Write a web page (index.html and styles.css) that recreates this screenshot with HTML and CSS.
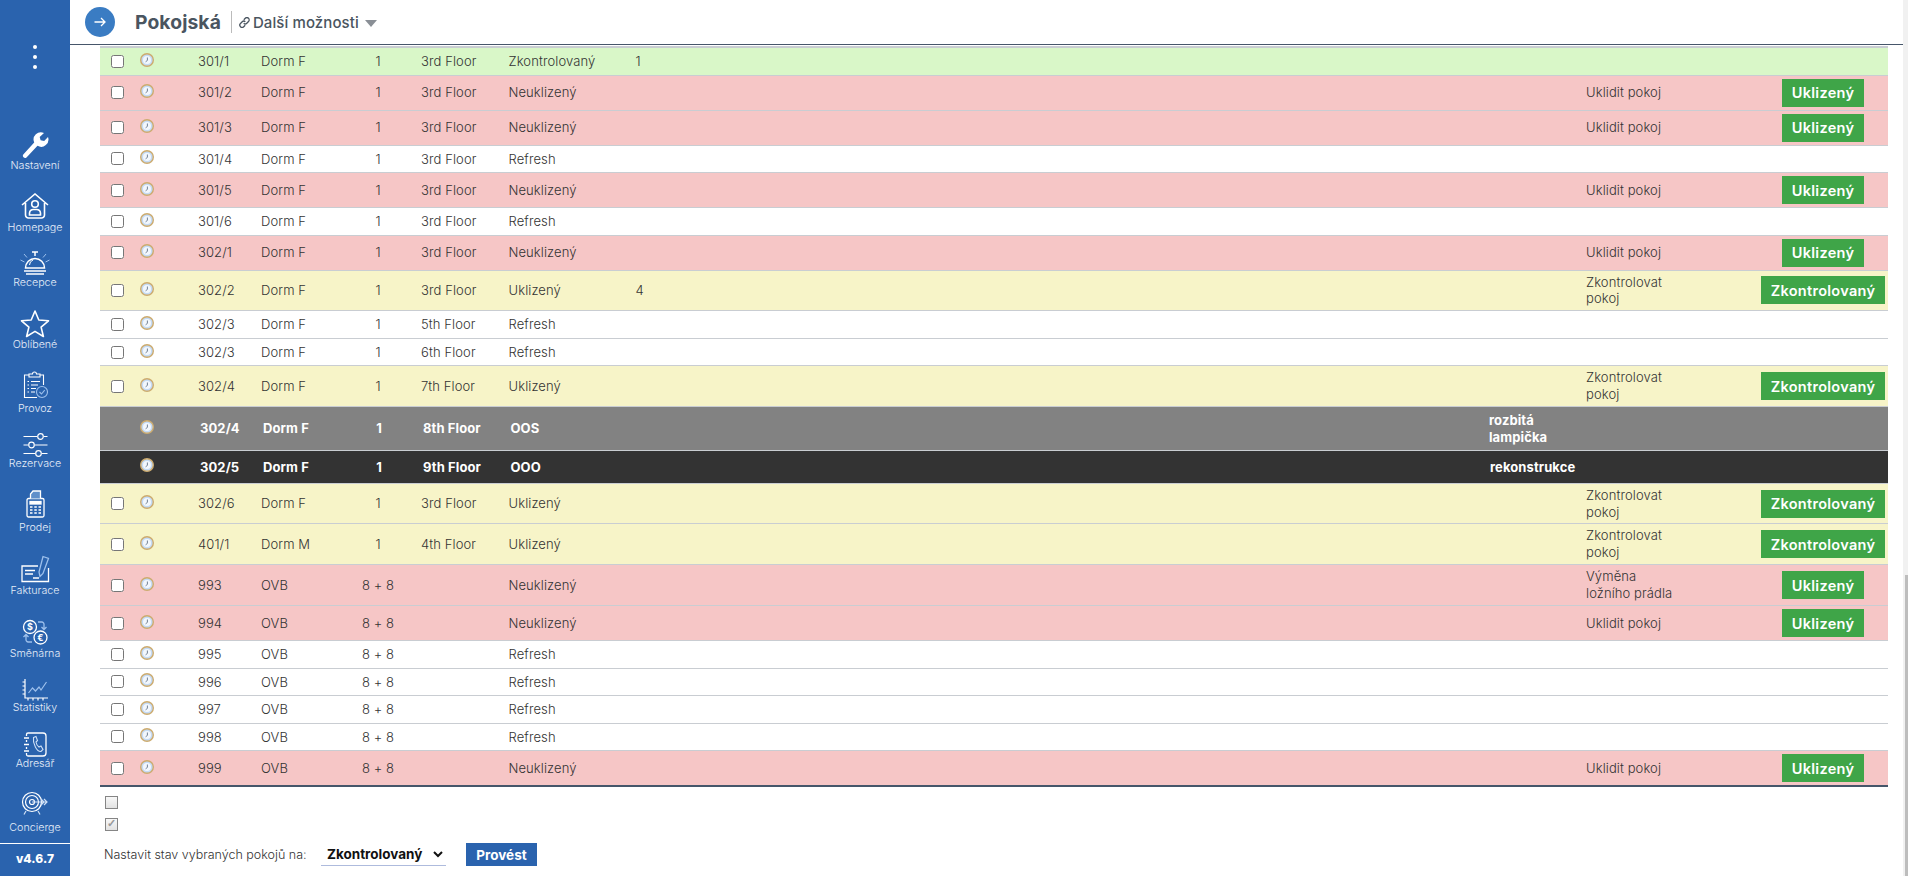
FILE: index.html
```html
<!DOCTYPE html>
<html lang="cs">
<head>
  <meta charset="UTF-8">
  <title>Pokojská</title>
  <link rel="stylesheet" href="styles.css">
</head>
<body>

<svg class="sprite" aria-hidden="true">
  <symbol id="clock" viewBox="0 0 14 14">
    <circle cx="7" cy="7" r="6.3" fill="#c4daf4" stroke="#cdab6e" stroke-width="1.4"/>
    <circle cx="7" cy="7" r="4" fill="#f2f7fd"/>
    <path d="M7.400 4.500V7.400L5.600 8.800" fill="none" stroke="#64748a" stroke-width="0.9"/>
  </symbol>
</svg>

<aside class="sidebar">
  <div class="dots"><i></i><i></i><i></i></div>
  <nav class="nav">
    <a class="nav-item h-first">
      <svg width="28" height="28" viewBox="0 0 28 28"><path d="M2.500 23.300 L13.200 11.500 A7.300 7.300 0 0 1 23 2 L18.700 6 L19.600 9.300 L23.200 10 L27 6 A7.300 7.300 0 0 1 16.500 14.800 L5.500 26.500 A2.200 2.200 0 0 1 2.500 23.300Z" fill="#fff"/></svg>
      <span>Nastavení</span>
    </a>
    <a class="nav-item h62">
      <svg class="gap2" width="28" height="26" viewBox="0 0 28 26" fill="none" stroke="#fff" stroke-width="1.600"><path d="M1 12 14 1l13 11M4.500 10v12a3 3 0 0 0 3 3h13a3 3 0 0 0 3-3V10"/><circle cx="14" cy="11" r="3.300"/><path d="M8.500 22v-2a4 4 0 0 1 4-3.500h3a4 4 0 0 1 4 3.500v2z"/></svg>
      <span>Homepage</span>
    </a>
    <a class="nav-item h55">
      <svg class="gap1" width="30" height="24" viewBox="0 0 30 24" fill="none" stroke="#fff" stroke-width="1.500"><path d="M12 1h6M15 1v4M5.500 17a9.500 9.500 0 0 1 19 0zM4 20h22M6 23h18"/><path d="M9.500 14a5.500 5.500 0 0 1 3.500-5" stroke-width="1"/><path d="M0.500 9l4 2M29.500 9l-4 2M4 3l3 3.500M26 3l-3 3.500" stroke="#9dc0ec" stroke-width="1"/></svg>
      <span>Recepce</span>
    </a>
    <a class="nav-item h62">
      <svg width="30" height="29" viewBox="0 0 30 29" fill="none" stroke="#fff" stroke-width="1.600"><path d="M15 2l3.800 9 9.700.8-7.400 6.300 2.300 9.400L15 22.400l-8.400 5.100 2.300-9.400L1.500 11.800l9.700-.8z" stroke-linejoin="round"/></svg>
      <span>Oblíbené</span>
    </a>
    <a class="nav-item h64">
      <svg class="gap3" width="25" height="28" viewBox="0 0 25 28" fill="none" stroke="#fff" stroke-width="1.100"><path d="M6 4H1.500v22.500H14M17 4h3.500v10M6 6V3h3.500a2 2 0 0 1 4 0H17v3z"/><path d="M4.500 10.500h1.500M8 10.500h9M4.500 14h1.500M8 14h7M4.500 17.500h1.500M8 17.500h5M4.500 21h1.500M8 21h4"/><circle cx="19" cy="21" r="5.500" stroke="#9dc0ec"/><path d="M16.500 21l2 2 3.200-3.800" stroke="#9dc0ec"/></svg>
      <span>Provoz</span>
    </a>
    <a class="nav-item h55">
      <svg width="25" height="24" viewBox="0 0 25 24" fill="none" stroke="#fff" stroke-width="1.200"><path d="M0.500 3.500H14M21 3.500H24.500M0.500 12H5M12 12H24.500M0.500 20.500H12M19 20.500H24.500"/><circle cx="17.500" cy="3.500" r="2.800"/><circle cx="8.500" cy="12" r="2.800"/><circle cx="15.500" cy="20.500" r="2.800"/></svg>
      <span>Rezervace</span>
    </a>
    <a class="nav-item h64">
      <svg class="gap3" width="19" height="28" viewBox="0 0 19 28" fill="none" stroke="#fff" stroke-width="1.300"><rect x="1" y="8.500" width="17" height="18.500" rx="1.500"/><path d="M4.500 8.500V4L7 1h7.500v7.500" fill="#5f8fca"/><rect x="4" y="11.500" width="11" height="2.500" fill="#fff"/><path d="M4 17h2.500M8.300 17h2.500M12.500 17h2.500M4 20h2.500M8.300 20h2.500M12.500 20h2.500M4 23h2.500M8.300 23h2.500M12.500 23h2.500" stroke-width="1.600"/></svg>
      <span>Prodej</span>
    </a>
    <a class="nav-item h63">
      <svg class="gap1" width="29" height="28" viewBox="0 0 29 28" fill="none" stroke="#fff" stroke-width="1.300"><path d="M17 11H1v15.500h26.500V13"/><path d="M4 15.500h10M4 19h8M12 23h6" stroke-width="1.500"/><path d="M22 1.500l5.500 2-5.500 15-3 3-1-4.500z" stroke="#9dc0ec" fill="#2a63ae"/></svg>
      <span>Fakturace</span>
    </a>
    <a class="nav-item h63">
      <svg class="gap2" width="26" height="26" viewBox="0 0 26 26" fill="none" stroke="#fff" stroke-width="1.300"><circle cx="8" cy="8" r="6.500"/><circle cx="18.500" cy="18.500" r="6.500"/><path d="M16 3h4a2.500 2.500 0 0 1 2 3v4M19.500 8l2.500 2.500L24.500 8M10 23H6a2.500 2.500 0 0 1-2-3v-4M1.500 18L4 15.500 6.500 18" stroke="#9dc0ec"/><text x="8" y="11.300" class="coin">$</text><text x="18.500" y="21.800" class="coin">€</text></svg>
      <span>Směnárna</span>
    </a>
    <a class="nav-item h54">
      <svg width="27" height="23" viewBox="0 0 27 23" fill="none" stroke="#fff" stroke-width="1.200"><path d="M3 1v19h23M0.500 4H3M0.500 8H3M0.500 12H3M0.500 16H3M6 20v2.500M11 20v2.500M16 20v2.500M21 20v2.500"/><path d="M6.500 15l4-5 3 3 3.500-4 2 3 5.500-8" stroke="#9dc0ec"/></svg>
      <span>Statistiky</span>
    </a>
    <a class="nav-item h56">
      <svg width="24" height="25" viewBox="0 0 24 25" fill="none" stroke="#fff" stroke-width="1.300"><path d="M3.500 4V2.500a1.500 1.500 0 0 1 1.500-1.500h15a3 3 0 0 1 3 3v17a3 3 0 0 1-3 3H5a1.500 1.500 0 0 1-1.500-1.500V21M3.500 8v2M3.500 15v2"/><path d="M1 6h5M1 12.500h5M1 19h5"/><path d="M10.500 5.500l2.500-1 1.500 4-1.500 1.500c.3 2 1.500 4 3 5l2-1 2 3.500-2 2c-4 .5-8.500-8-7.500-14z" stroke-width="1.100" stroke="#cfe0f6"/></svg>
      <span>Adresář</span>
    </a>
    <a class="nav-item h64">
      <svg class="gap6" width="28" height="24" viewBox="0 0 28 24" fill="none" stroke="#fff" stroke-width="1.200"><circle cx="11" cy="11" r="9.500"/><circle cx="11" cy="11" r="6.500"/><circle cx="11" cy="11" r="2.500"/><path d="M11 11h15M23 8l3 3-3 3M20 8l3 3-3 3M5 20l-2 3.500M17 20l2 3.500" stroke="#cfe0f6"/></svg>
      <span>Concierge</span>
    </a>
  </nav>
  <div class="version">v4.6.7</div>
</aside>

<div class="scrollbar"><div class="thumb"></div></div>

<main class="main">
  <header class="topbar">
    <button class="round-btn">
      <svg width="12" height="10" viewBox="0 0 12 10" fill="none" stroke="#fff" stroke-width="1.300"><path d="M0.500 5h10.500M7 1l4 4-4 4"/></svg>
    </button>
    <h1 class="title">Pokojská</h1>
    <a class="more">
      <svg width="11" height="11" viewBox="0 0 11 11" fill="none" stroke="#4a5560" stroke-width="1.300"><path d="M4.800 2.800l1.500-1.500a2.200 2.200 0 0 1 3.200 3.200L7.800 6.200a2.200 2.200 0 0 1-3.100 0M6.200 8.200L4.700 9.700a2.200 2.200 0 0 1-3.200-3.200l1.700-1.700a2.200 2.200 0 0 1 3.100 0"/></svg>
      Další možnosti
      <span class="caret"></span>
    </a>
  </header>

  <table class="rooms">
    <colgroup>
      <col class="c-check"><col class="c-clock"><col class="c-num"><col class="c-type"><col class="c-beds">
      <col class="c-floor"><col class="c-state"><col class="c-count"><col class="c-note"><col class="c-task"><col class="c-action">
    </colgroup>
    <tr class="green">
      <td><input type="checkbox"></td><td class="ic"><svg class="clock"><use href="#clock"/></svg></td><td>301/1</td><td>Dorm F</td><td class="mid">1</td><td>3rd Floor</td><td>Zkontrolovaný</td><td>1</td><td></td><td></td><td></td>
    </tr>
    <tr class="red">
      <td><input type="checkbox"></td><td class="ic"><svg class="clock"><use href="#clock"/></svg></td><td>301/2</td><td>Dorm F</td><td class="mid">1</td><td>3rd Floor</td><td>Neuklizený</td><td></td><td></td><td><div class="wrap">Uklidit pokoj</div></td><td class="act"><button class="go">Uklizený</button></td>
    </tr>
    <tr class="red">
      <td><input type="checkbox"></td><td class="ic"><svg class="clock"><use href="#clock"/></svg></td><td>301/3</td><td>Dorm F</td><td class="mid">1</td><td>3rd Floor</td><td>Neuklizený</td><td></td><td></td><td><div class="wrap">Uklidit pokoj</div></td><td class="act"><button class="go">Uklizený</button></td>
    </tr>
    <tr>
      <td><input type="checkbox"></td><td class="ic"><svg class="clock"><use href="#clock"/></svg></td><td>301/4</td><td>Dorm F</td><td class="mid">1</td><td>3rd Floor</td><td>Refresh</td><td></td><td></td><td></td><td></td>
    </tr>
    <tr class="red">
      <td><input type="checkbox"></td><td class="ic"><svg class="clock"><use href="#clock"/></svg></td><td>301/5</td><td>Dorm F</td><td class="mid">1</td><td>3rd Floor</td><td>Neuklizený</td><td></td><td></td><td><div class="wrap">Uklidit pokoj</div></td><td class="act"><button class="go">Uklizený</button></td>
    </tr>
    <tr>
      <td><input type="checkbox"></td><td class="ic"><svg class="clock"><use href="#clock"/></svg></td><td>301/6</td><td>Dorm F</td><td class="mid">1</td><td>3rd Floor</td><td>Refresh</td><td></td><td></td><td></td><td></td>
    </tr>
    <tr class="red">
      <td><input type="checkbox"></td><td class="ic"><svg class="clock"><use href="#clock"/></svg></td><td>302/1</td><td>Dorm F</td><td class="mid">1</td><td>3rd Floor</td><td>Neuklizený</td><td></td><td></td><td><div class="wrap">Uklidit pokoj</div></td><td class="act"><button class="go">Uklizený</button></td>
    </tr>
    <tr class="yellow">
      <td><input type="checkbox"></td><td class="ic"><svg class="clock"><use href="#clock"/></svg></td><td>302/2</td><td>Dorm F</td><td class="mid">1</td><td>3rd Floor</td><td>Uklizený</td><td>4</td><td></td><td><div class="wrap">Zkontrolovat pokoj</div></td><td class="act"><button class="go">Zkontrolovaný</button></td>
    </tr>
    <tr>
      <td><input type="checkbox"></td><td class="ic"><svg class="clock"><use href="#clock"/></svg></td><td>302/3</td><td>Dorm F</td><td class="mid">1</td><td>5th Floor</td><td>Refresh</td><td></td><td></td><td></td><td></td>
    </tr>
    <tr>
      <td><input type="checkbox"></td><td class="ic"><svg class="clock"><use href="#clock"/></svg></td><td>302/3</td><td>Dorm F</td><td class="mid">1</td><td>6th Floor</td><td>Refresh</td><td></td><td></td><td></td><td></td>
    </tr>
    <tr class="yellow">
      <td><input type="checkbox"></td><td class="ic"><svg class="clock"><use href="#clock"/></svg></td><td>302/4</td><td>Dorm F</td><td class="mid">1</td><td>7th Floor</td><td>Uklizený</td><td></td><td></td><td><div class="wrap">Zkontrolovat pokoj</div></td><td class="act"><button class="go">Zkontrolovaný</button></td>
    </tr>
    <tr class="oos">
      <td></td><td class="ic"><svg class="clock"><use href="#clock"/></svg></td><td>302/4</td><td>Dorm F</td><td class="mid">1</td><td>8th Floor</td><td>OOS</td><td></td><td><div class="wrap">rozbitá lampička</div></td><td></td><td></td>
    </tr>
    <tr class="ooo">
      <td></td><td class="ic"><svg class="clock"><use href="#clock"/></svg></td><td>302/5</td><td>Dorm F</td><td class="mid">1</td><td>9th Floor</td><td>OOO</td><td></td><td>rekonstrukce</td><td></td><td></td>
    </tr>
    <tr class="yellow">
      <td><input type="checkbox"></td><td class="ic"><svg class="clock"><use href="#clock"/></svg></td><td>302/6</td><td>Dorm F</td><td class="mid">1</td><td>3rd Floor</td><td>Uklizený</td><td></td><td></td><td><div class="wrap">Zkontrolovat pokoj</div></td><td class="act"><button class="go">Zkontrolovaný</button></td>
    </tr>
    <tr class="yellow">
      <td><input type="checkbox"></td><td class="ic"><svg class="clock"><use href="#clock"/></svg></td><td>401/1</td><td>Dorm M</td><td class="mid">1</td><td>4th Floor</td><td>Uklizený</td><td></td><td></td><td><div class="wrap">Zkontrolovat pokoj</div></td><td class="act"><button class="go">Zkontrolovaný</button></td>
    </tr>
    <tr class="red">
      <td><input type="checkbox"></td><td class="ic"><svg class="clock"><use href="#clock"/></svg></td><td>993</td><td>OVB</td><td class="mid">8 + 8</td><td></td><td>Neuklizený</td><td></td><td></td><td><div class="wrap">Výměna ložního prádla</div></td><td class="act"><button class="go">Uklizený</button></td>
    </tr>
    <tr class="red">
      <td><input type="checkbox"></td><td class="ic"><svg class="clock"><use href="#clock"/></svg></td><td>994</td><td>OVB</td><td class="mid">8 + 8</td><td></td><td>Neuklizený</td><td></td><td></td><td><div class="wrap">Uklidit pokoj</div></td><td class="act"><button class="go">Uklizený</button></td>
    </tr>
    <tr>
      <td><input type="checkbox"></td><td class="ic"><svg class="clock"><use href="#clock"/></svg></td><td>995</td><td>OVB</td><td class="mid">8 + 8</td><td></td><td>Refresh</td><td></td><td></td><td></td><td></td>
    </tr>
    <tr>
      <td><input type="checkbox"></td><td class="ic"><svg class="clock"><use href="#clock"/></svg></td><td>996</td><td>OVB</td><td class="mid">8 + 8</td><td></td><td>Refresh</td><td></td><td></td><td></td><td></td>
    </tr>
    <tr>
      <td><input type="checkbox"></td><td class="ic"><svg class="clock"><use href="#clock"/></svg></td><td>997</td><td>OVB</td><td class="mid">8 + 8</td><td></td><td>Refresh</td><td></td><td></td><td></td><td></td>
    </tr>
    <tr>
      <td><input type="checkbox"></td><td class="ic"><svg class="clock"><use href="#clock"/></svg></td><td>998</td><td>OVB</td><td class="mid">8 + 8</td><td></td><td>Refresh</td><td></td><td></td><td></td><td></td>
    </tr>
    <tr class="red last">
      <td><input type="checkbox"></td><td class="ic"><svg class="clock"><use href="#clock"/></svg></td><td>999</td><td>OVB</td><td class="mid">8 + 8</td><td></td><td>Neuklizený</td><td></td><td></td><td><div class="wrap">Uklidit pokoj</div></td><td class="act"><button class="go">Uklizený</button></td>
    </tr>
  </table>

  <div class="bulk">
    <input class="box" type="checkbox" disabled>
    <input class="box" type="checkbox" disabled checked>
    <div class="bulk-row">
      <label class="bulk-label">Nastavit stav vybraných pokojů na:</label>
      <select class="bulk-select"><option>Zkontrolovaný</option></select>
      <button class="apply">Provést</button>
    </div>
  </div>
</main>

</body>
</html>
```

FILE: styles.css
```css
html, body {
  height: 100%;
}
body {
  margin: 0;
  display: flex;
  overflow: hidden;
  background: #fff;
  color: #333;
  font-family: Inter, "Noto Sans", sans-serif;
  font-size: 13px;
  font-weight: 350;
  letter-spacing: 0.1px;
}
.sprite {
  display: none;
}

/* levy panel */
.sidebar {
  width: 70px;
  flex: none;
  display: flex;
  flex-direction: column;
  background: #2a63ae;
  color: #fff;
}
.dots {
  display: flex;
  flex-direction: column;
  align-items: center;
  gap: 6px;
  height: 73px;
  padding-top: 45px;
  box-sizing: border-box;
}
.dots i {
  width: 4px;
  height: 4px;
  border-radius: 50%;
  background: #fff;
}
.nav {
  flex: 1;
}
.nav-item {
  display: flex;
  flex-direction: column;
  align-items: center;
  justify-content: flex-end;
}
.nav-item span {
  font-size: 10.7px;
  line-height: 14px;
  letter-spacing: 0;
  color: #e6eef9;
}
.h-first { height: 99.5px; }
.h54 { height: 54px; }
.h55 { height: 55px; }
.h56 { height: 56px; }
.h62 { height: 62px; }
.h63 { height: 63px; }
.h64 { height: 64px; }
.gap1 { margin-bottom: 1px; }
.gap2 { margin-bottom: 2px; }
.gap3 { margin-bottom: 3px; }
.gap6 { margin-bottom: 6px; }
.coin {
  fill: #fff;
  stroke: none;
  font-size: 9px;
  font-weight: 700;
  text-anchor: middle;
}
.version {
  height: 32px;
  border-top: 1px solid #fff;
  text-align: center;
  line-height: 30px;
  font-size: 12px;
  font-weight: 800;
}

.scrollbar {
  order: 3;
  width: 5px;
  flex: none;
  display: flex;
  flex-direction: column;
  justify-content: flex-end;
  align-items: flex-end;
  background: #f1f1f1;
}
.thumb {
  width: 3px;
  height: 301px;
  background: #bdbdbd;
}

.main {
  flex: 1;
  min-width: 0;
}

/* hlavicka */
.topbar {
  height: 44px;
  display: flex;
  align-items: center;
  padding-left: 15px;
  border-bottom: 1px solid #46566a;
}
.round-btn {
  width: 30px;
  height: 30px;
  padding: 0;
  border: none;
  border-radius: 50%;
  background: #3a7cc3;
}
.title {
  margin: 0 7px 0 20px;
  padding-right: 10px;
  border-right: 1px solid #bbb;
  font-size: 19.3px;
  line-height: 22px;
  font-weight: 700;
  color: #4a5560;
}
.more {
  display: flex;
  align-items: center;
  gap: 3px;
  font-size: 15px;
  font-weight: 500;
  color: #4a5560;
}
.caret {
  margin-left: 3px;
  border-left: 6.5px solid transparent;
  border-right: 6.5px solid transparent;
  border-top: 7px solid #8a8f96;
  margin-top: 3px;
}

/* tabulka pokoju */
.rooms {
  width: 1788px;
  margin: 1px 0 0 30px;
  border-collapse: collapse;
  table-layout: fixed;
  border-top: 2px solid #c9cdd2;
}
.c-check { width: 35px; }
.c-clock { width: 58px; }
.c-num { width: 63px; }
.c-type { width: 84px; }
.c-beds { width: 76px; }
.c-floor { width: 87.5px; }
.c-state { width: 127px; }
.c-count { width: 852.5px; }
.c-note { width: 98px; }
.c-task { width: 177px; }
.c-action { width: 130px; }

.rooms tr {
  border-bottom: 1px solid #c9cdd2;
}
.rooms td {
  padding: 3px 5px;
  line-height: 20.5px;
  vertical-align: middle;
  white-space: nowrap;
}
.rooms input {
  display: block;
  margin: 0 0 0 6px;
  width: 13px;
  height: 13px;
}
.rooms .ic {
  padding-top: 0;
  padding-bottom: 0;
}
.clock {
  display: block;
  width: 14px;
  height: 14px;
  margin-bottom: 3px;
}
.mid {
  text-align: center;
}
.wrap {
  width: 92px;
  line-height: 16.9px;
  white-space: normal;
}
.act {
  text-align: center;
}
.rooms .act {
  padding: 3px 0;
}

.green { background: #d9f7c8; }
.red { background: #f6c6c6; }
.yellow { background: #f7f4c8; }
.oos td, .ooo td {
  color: #fff;
  font-weight: 700;
}
.oos { background: #828282; }
.ooo { background: #333; }
.rooms .oos td {
  padding: 4.6px 5px 4.6px 7px;
}
.rooms .ooo td {
  padding: 5.5px 5px 5.5px 7px;
}
.oos .wrap {
  margin-left: -1px;
}
.rooms .oos .ic, .rooms .ooo .ic {
  padding: 0 5px;
}
.rooms .last {
  border-bottom: 2px solid #46566a;
}

.go {
  height: 28px;
  padding: 0 10px;
  border: none;
  background: #3fa548;
  color: #fff;
  font-family: inherit;
  font-size: 14.5px;
  letter-spacing: 0.3px;
  font-weight: 600;
}

/* hromadna akce */
.bulk {
  display: flex;
  flex-direction: column;
  align-items: flex-start;
  padding: 9px 0 0 35px;
}
.box {
  appearance: none;
  box-sizing: border-box;
  margin: 0 0 9px;
  width: 13px;
  height: 13px;
  border: 1px solid #858585;
  background: linear-gradient(#f8f8f8, #e2e2e2);
  position: relative;
}
.box:checked::after {
  content: "✓";
  position: absolute;
  left: 1px;
  top: -2px;
  font-size: 11px;
  font-weight: 700;
  color: #9a9a9a;
}
.bulk-row {
  display: flex;
  align-items: center;
  margin-top: 3px;
}
.bulk-label {
  width: 216px;
  font-size: 12.5px;
  letter-spacing: 0;
  margin-left: -1px;
  margin-right: 1px;
}
.bulk-select {
  width: 125px;
  height: 23px;
  padding: 0 0 0 2px;
  border: none;
  border-bottom: 1px solid #aebbdd;
  background: #fff;
  font-family: inherit;
  font-size: 13.5px;
  font-weight: 700;
  color: #111;
}
.apply {
  margin-left: 20px;
  width: 71px;
  height: 23px;
  padding: 0;
  border: none;
  background: #2a63ae;
  color: #fff;
  font-family: inherit;
  font-size: 13.5px;
  font-weight: 700;
}
```
